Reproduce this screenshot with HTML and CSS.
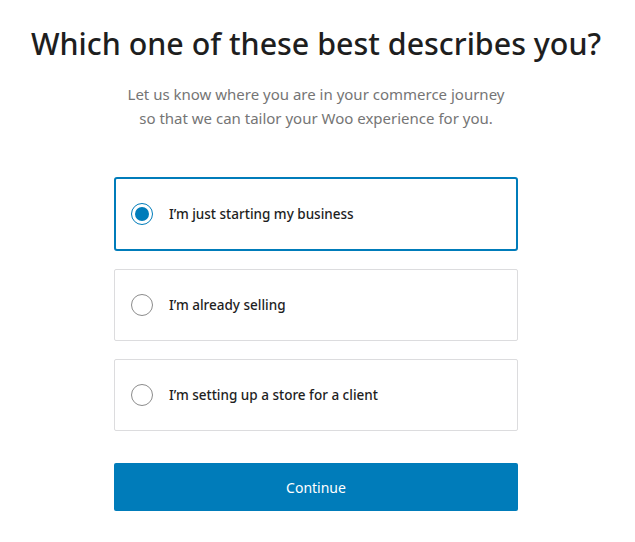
FILE: index.html
```html
<!DOCTYPE html>
<html lang="en">
<head>
<meta charset="utf-8">
<title>Which one of these best describes you?</title>
<link rel="stylesheet" href="styles.css">
</head>
<body>
<main class="page">
  <h1 class="title">Which one of these best describes you?</h1>
  <p class="subtitle">Let us know where you are in your commerce journey<br>so that we can tailor your Woo experience for you.</p>
  <div class="options">
    <label class="option is-selected">
      <span class="radio is-checked"></span>
      <span class="option-label">I’m just starting my business</span>
    </label>
    <label class="option">
      <span class="radio"></span>
      <span class="option-label">I’m already selling</span>
    </label>
    <label class="option">
      <span class="radio"></span>
      <span class="option-label">I’m setting up a store for a client</span>
    </label>
  </div>
  <button class="continue" type="button">Continue</button>
</main>
</body>
</html>
```
FILE: styles.css
```css
* { box-sizing: border-box; }
html, body { margin: 0; padding: 0; background: #fff; }
body {
  font-family: "Noto Sans", "Open Sans", sans-serif;
  color: #1e1e1e;
}
.page {
  display: flex;
  flex-direction: column;
  align-items: center;
  padding: 24px 3px 0 0;
}
.title {
  margin: 0;
  font-size: 30.4px;
  line-height: 40px;
  font-weight: 500;
  color: #1e1e1e;
  white-space: nowrap;
}
.subtitle {
  margin: 18px 0 0;
  font-size: 15px;
  line-height: 24px;
  color: #757575;
  text-align: center;
}
.options {
  width: 404px;
  margin-top: 47px;
  display: flex;
  flex-direction: column;
  gap: 18px;
}
.option {
  height: 72px;
  border: 1px solid #dcdcde;
  border-radius: 2px;
  display: flex;
  align-items: center;
  padding-left: 16px;
  cursor: pointer;
}
.option.is-selected {
  height: 74px;
  border: 2px solid #007cba;
  padding-left: 15px;
  border-radius: 3px;
}
.radio {
  width: 22px;
  height: 22px;
  border: 1px solid #8c8c8c;
  border-radius: 50%;
  flex: none;
  position: relative;
}
.radio.is-checked {
  border: 1.5px solid #007cba;
}
.radio.is-checked::after {
  content: "";
  position: absolute;
  left: 50%;
  top: 50%;
  width: 14px;
  height: 14px;
  margin: -7px 0 0 -7px;
  border-radius: 50%;
  background: #007cba;
}
.option-label {
  margin-left: 16px;
  font-size: 13.5px;
  font-weight: 500;
  color: #1e1e1e;
}
.continue {
  width: 404px;
  height: 48px;
  margin-top: 32px;
  border: 0;
  border-radius: 2px;
  background: #007cba;
  color: #fff;
  font-family: inherit;
  font-size: 14px;
  cursor: pointer;
}
```
